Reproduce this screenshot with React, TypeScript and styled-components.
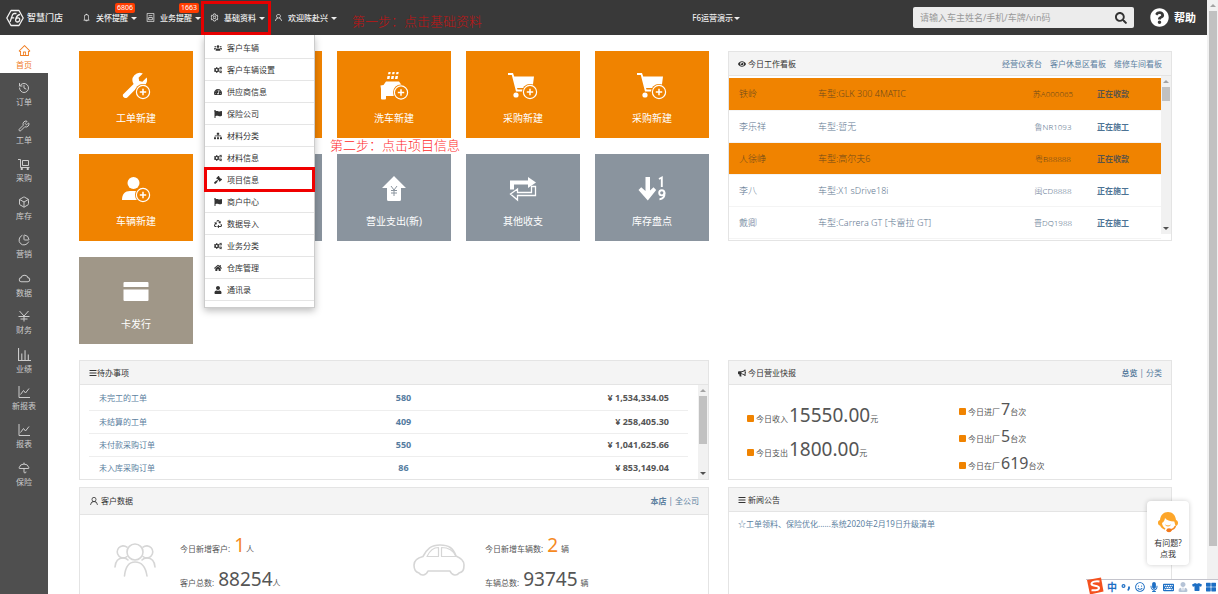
import React from 'react';
import styled, { createGlobalStyle } from 'styled-components';
import {
  AiOutlineHome, AiOutlineCloud, AiOutlineBell, AiOutlineSetting, AiOutlineUser,
} from 'react-icons/ai';
import {
  FaUsers, FaCogs, FaTachometerAlt, FaFlag, FaSitemap, FaGavel, FaRecycle, FaHome, FaUser,
  FaEye, FaBars, FaBullhorn, FaQuestionCircle, FaSearch, FaMicrophone, FaTshirt, FaKeyboard,
  FaUserTie, FaThLarge, FaRegSmile,
} from 'react-icons/fa';
import { Umbrella, History, Wrench, Box, PieChart } from 'lucide-react';

const ORANGE = '#f08300';
const SLATE = '#8a949e';
const TAUPE = '#a09788';
const LINK = '#5c7f9f';
const LINE = '#e4e4e4';

const GlobalStyle = createGlobalStyle`
  * { box-sizing: border-box; }
  body {
    margin: 0;
    font-family: 'Noto Sans', 'Noto Sans CJK SC', sans-serif;
    font-size: 8px;
    line-height: 12px;
    color: #555;
    background: #fff;
  }
  button, input { font: inherit; color: inherit; border: 0; padding: 0; background: none; }
  button { cursor: pointer; }
  a { color: inherit; text-decoration: none; }
  ul { list-style: none; margin: 0; padding: 0; }
  h2 { margin: 0; font: inherit; }
  svg { display: block; flex: none; }
`;

const Page = styled.div`
  position: relative;
  display: flex;
  height: 100vh;
  overflow: hidden;
`;
const Shell = styled.div`
  flex: 1;
  min-width: 0;
  display: flex;
  flex-direction: column;
`;

/* ---------- header ---------- */
const Header = styled.header`
  position: relative;
  z-index: 5;
  flex: none;
  display: flex;
  align-items: center;
  height: 35px;
  padding: 0 11px 0 6px;
  color: #eee;
  background: #393939;
`;
const Brand = styled.a`
  display: flex;
  align-items: center;
  gap: 3px;
  width: 76px;
  font-size: 9px;
  font-weight: 500;
`;
const Nav = styled.nav`
  display: flex;
  gap: 9px;
`;
const NavItem = styled.div`
  position: relative;
`;
const NavButton = styled.button`
  display: flex;
  align-items: center;
  height: 35px;
  white-space: nowrap;
  font-weight: 500;
`;
const NavLabel = styled.span`
  margin: 0 3px 0 5px;
`;
const Caret = styled.i`
  border: solid transparent;
  border-width: 3px 3px 0;
  border-top-color: currentColor;
  margin-top: 2px;
`;
const Badge = styled.span`
  position: absolute;
  top: 3px;
  right: 2px;
  height: 10px;
  padding: 0 2px;
  border-radius: 2px;
  font-size: 7px;
  line-height: 10px;
  color: #fff;
  background: #ff3c00;
`;
const Highlight = styled.span`
  position: absolute;
  z-index: 3;
  inset: 1px -6px 0 -9px;
  border: 3px solid #e60000;
  pointer-events: none;
`;
const Note = styled.p<{ $x: number; $y: number; $color: string }>`
  position: absolute;
  z-index: 6;
  left: ${p => p.$x}px;
  top: ${p => p.$y}px;
  margin: 0;
  font-size: 13px;
  font-weight: 300;
  line-height: 16px;
  white-space: nowrap;
  color: ${p => p.$color};
`;
const Store = styled.button`
  display: flex;
  align-items: center;
  margin: 0 173px 0 auto;
  gap: 1px;
  white-space: nowrap;
  font-weight: 500;
`;
const SearchBox = styled.form`
  display: flex;
  align-items: center;
  width: 221px;
  height: 21px;
  padding: 0 7px;
  border-radius: 2px;
  color: #333;
  background: #ececec;
`;
const SearchInput = styled.input`
  flex: 1;
  min-width: 0;
  font-size: 9px;
  outline: 0;
  &::placeholder { color: #999; opacity: 1; }
`;
const Help = styled.a`
  display: flex;
  align-items: center;
  gap: 5px;
  margin-left: 16px;
  font-size: 11px;
  font-weight: 700;
  color: #fff;
`;

/* ---------- drop-down ---------- */
const Menu = styled.ul`
  position: absolute;
  top: 35px;
  left: -6px;
  width: 111px;
  padding: 2px 0 6px;
  background: #fff;
  border: 1px solid #ccc;
  border-top: 0;
  box-shadow: 0 3px 7px rgba(0, 0, 0, 0.25);
  color: #333;
`;
const MenuItem = styled.li<{ $marked?: boolean }>`
  position: relative;
  border-bottom: 1px solid #e5e5e5;
  ${p => p.$marked && `
    &::after {
      content: '';
      position: absolute;
      inset: -2px -1px;
      border: 3px solid #f00000;
      pointer-events: none;
    }
  `}
`;
const MenuLink = styled.a`
  display: flex;
  align-items: center;
  gap: 5px;
  height: 21px;
  padding-left: 9px;
`;

/* ---------- side bar ---------- */
const Body = styled.div`
  flex: 1;
  min-height: 0;
  display: flex;
`;
const Side = styled.nav`
  flex: none;
  width: 48px;
  background: #4f4f4f;
`;
const SideLink = styled.a<{ $active?: boolean }>`
  display: flex;
  flex-direction: column;
  align-items: center;
  gap: 2px;
  height: 38px;
  padding-top: 9px;
  color: ${p => (p.$active ? '#f07c1e' : '#ccc')};
  background: ${p => (p.$active ? '#fff' : 'transparent')};
`;

/* ---------- main ---------- */
const Main = styled.main`
  flex: 1;
  min-width: 0;
  overflow: hidden;
  display: grid;
  grid-template-columns: 630fr 444fr;
  grid-template-rows: auto auto auto;
  align-content: start;
  column-gap: 19px;
  padding: 16px 35px 0 31px;
`;
const Tiles = styled.div`
  display: grid;
  grid-template-columns: repeat(5, 1fr);
  gap: 16px 15px;
  margin-bottom: 16px;
`;
const Tile = styled.button<{ $bg: string }>`
  display: flex;
  flex-direction: column;
  align-items: center;
  gap: 10px;
  height: 87px;
  padding-top: 21px;
  font-size: 10px;
  line-height: 16px;
  color: #fff;
  background: ${p => p.$bg};
`;
const Panel = styled.section<{ $h: number }>`
  display: flex;
  flex-direction: column;
  align-self: start;
  min-height: ${p => p.$h}px;
  margin-bottom: 7px;
  border: 1px solid ${LINE};
  background: #fff;
`;
const PanelHead = styled.header<{ $tall?: boolean }>`
  display: flex;
  align-items: center;
  justify-content: space-between;
  height: ${p => (p.$tall ? 27 : 24)}px;
  padding: 0 9px;
  border-bottom: 1px solid ${LINE};
  background: #f4f4f4;
`;
const PanelTitle = styled.h2<{ $gap?: number }>`
  display: flex;
  align-items: center;
  gap: ${p => p.$gap ?? 2}px;
  color: #333;
`;
const PanelLinks = styled.div<{ $gap: number }>`
  display: flex;
  gap: ${p => p.$gap}px;
  color: ${LINK};
`;
const Scrollable = styled.div`
  display: flex;
`;

const Board = styled.table`
  flex: 1;
  margin-top: 2px;
  table-layout: fixed;
  border-collapse: collapse;
  align-self: flex-start;
`;
const BoardRow = styled.tr<{ $hot?: boolean }>`
  height: 32px;
  border-bottom: 1px solid #f4f4f4;
  color: ${p => (p.$hot ? '#6e4a1c' : '#5f7891')};
  background: ${p => (p.$hot ? ORANGE : '#fff')};
`;
const BoardCell = styled.td<{ $w?: number }>`
  width: ${p => (p.$w ? `${p.$w}px` : 'auto')};
  padding: 1px 0 0;
  font-size: 9px;
  font-weight: 300;
  white-space: nowrap;
  &:first-child { padding-left: 10px; }
`;
const Plate = styled(BoardCell)`
  font-size: 8px;
  text-align: center;
`;
const Status = styled(BoardCell)<{ $hot?: boolean }>`
  padding-right: 18px;
  font-size: 8px;
  font-weight: 700;
  text-align: center;
  color: ${p => (p.$hot ? '#5c5448' : '#4d7394')};
`;

const Todo = styled.table`
  flex: 1;
  margin: 2px 10px 0 9px;
  table-layout: fixed;
  border-collapse: collapse;
`;
const TodoRow = styled.tr`
  height: 23px;
  &:not(:last-child) { border-bottom: 1px solid #eee; }
`;
const TodoName = styled.td`
  width: 33%;
  padding: 0 0 0 10px;
  color: ${LINK};
`;
const TodoCount = styled.td`
  width: 39%;
  padding: 0;
  font-size: 9px;
  font-weight: 700;
  text-align: center;
  color: #557c9f;
`;
const TodoSum = styled.td`
  padding: 0 19px 0 0;
  font-size: 9px;
  font-weight: 700;
  text-align: right;
  color: #555;
`;

const Split = styled.div`
  display: grid;
  grid-template-columns: 1fr 1fr;
`;
const Figures = styled.div<{ $top: number; $left: number }>`
  padding: ${p => p.$top}px 0 0 ${p => p.$left}px;
`;
const Figure = styled.div<{ $small?: boolean }>`
  display: flex;
  align-items: baseline;
  height: ${p => (p.$small ? 27 : 34)}px;
  line-height: ${p => (p.$small ? 27 : 34)}px;
  white-space: nowrap;
`;
const Dot = styled.i`
  width: 7px;
  height: 7px;
  margin-right: 2px;
  border-radius: 1px;
  background: ${ORANGE};
`;
const Num = styled.span<{ $size: number; $gap: number; $hot?: boolean }>`
  margin-left: ${p => p.$gap}px;
  font-size: ${p => p.$size}px;
  color: ${p => (p.$hot ? '#f58a1f' : '#555')};
`;
const Unit = styled.span<{ $gap?: number }>`
  margin-left: ${p => p.$gap || 0}px;
`;
const Customers = styled.div`
  display: grid;
  grid-template-columns: 299fr 295fr;
  padding: 13px 0 0 34px;
`;
const Customer = styled.div<{ $art: number }>`
  display: grid;
  grid-template-columns: ${p => p.$art}px 1fr;
  & > svg { margin-top: 14px; }
`;
const News = styled.a`
  padding: 6px 9px;
  color: ${LINK};
`;

/* ---------- scroll bars ---------- */
const Bar = styled.div`
  flex: none;
  display: flex;
  flex-direction: column;
  align-items: center;
  width: 10px;
  background: #f1f1f1;
`;
const BoardBar = styled(Bar)`
  margin-bottom: 5px;
`;
const PageBar = styled(Bar)`
  width: 11px;
`;
const Arrow = styled.i<{ $down?: boolean }>`
  flex: none;
  margin: ${p => (p.$down ? 'auto 0 4px' : '4px 0')};
  border: solid transparent;
  border-width: ${p => (p.$down ? '3px 3px 0' : '0 3px 3px')};
  border-top-color: ${p => (p.$down ? '#505050' : 'transparent')};
  border-bottom-color: ${p => (p.$down ? 'transparent' : '#a3a3a3')};
`;
const Thumb = styled.div<{ $size: string }>`
  flex: none;
  width: 8px;
  height: ${p => p.$size};
  background: #c1c1c1;
`;

/* ---------- floating parts ---------- */
const Ask = styled.button`
  position: absolute;
  z-index: 4;
  right: 29px;
  bottom: 29px;
  display: flex;
  flex-direction: column;
  align-items: center;
  width: 42px;
  height: 64px;
  padding-top: 10px;
  border-radius: 4px;
  line-height: 11px;
  color: #333;
  background: #fff;
  box-shadow: 0 0 5px rgba(0, 0, 0, 0.2);
  & > svg { margin-bottom: 4px; }
`;
const Ime = styled.div`
  position: absolute;
  z-index: 6;
  right: 0;
  bottom: 0;
  display: flex;
  align-items: center;
  gap: 4px;
  height: 15px;
  padding: 0 2px 0 21px;
  border-top: 1px solid #c4c4cc;
  font-size: 10px;
  font-weight: 700;
  color: #1d6fc4;
  background: #fff;
  & > svg:first-child { position: absolute; left: 0; bottom: -1px; }
`;

/* ---------- drawings ---------- */
const PlusBadge = ({ bg, cx = 22, cy = 20 }: { bg: string; cx?: number; cy?: number }) => (
  <g stroke="#fff" fill="none">
    <circle cx={cx} cy={cy} r="8" fill={bg} stroke="none" />
    <circle cx={cx} cy={cy} r="6.6" strokeWidth="1.2" />
    <path d={`M${cx - 3.2} ${cy}h6.4M${cx} ${cy - 3.2}v6.4`} strokeWidth="1.5" />
  </g>
);
const TileSvg = ({ children }: { children: React.ReactNode }) => (
  <svg width="30" height="28" viewBox="0 0 30 28" fill="#fff">{children}</svg>
);
const WrenchArt = () => (
  <TileSvg>
    <path d="M2 22.5 12.6 12A7.3 7.3 0 0 1 21.8 1.5L17.6 5.8l.6 3.2 3.2.8 4.3-4.2c1.6 5-2 9.8-6.5 9.8-1 0-1.800-.1-2.500-.4L6.300 25.400a2.700 2.700 0 0 1-4.300-2.900z" />
    <PlusBadge bg={ORANGE} />
  </TileSvg>
);
const CarWashArt = () => (
  <TileSvg>
    <path d="M9.500 0h2.200l-.4 2.300H9zM13.500 0h2.200l-.4 2.300H13zM17.500 0h2.200l-.4 2.300H17zM8.500 4H11l-.5 3H8zM12.500 4H15l-.5 3H12zM16.500 4H19l-.5 3H16z" />
    <path d="M7 9.500h13l4 5.500v9H7v2.500a1 1 0 0 1-1 1H3a1 1 0 0 1-1-1V17l-.5-3.500 3-.5z" />
    <PlusBadge bg={ORANGE} cx={22} cy={20.5} />
  </TileSvg>
);
const CartArt = () => (
  <TileSvg>
    <path d="M0 1h5l1.200 3.500H26l-1.500 11.500H9l.5 1.500H22v2H8L3.800 3H0z" />
    <circle cx="8" cy="23" r="2.600" />
    <PlusBadge bg={ORANGE} />
  </TileSvg>
);
const PersonArt = () => (
  <TileSvg>
    <circle cx="12.500" cy="8" r="6" />
    <path d="M1 25c0-6 3-9 8-9h7c4 0 7 3 8 9z" />
    <PlusBadge bg={ORANGE} />
  </TileSvg>
);
const SpendArt = () => (
  <TileSvg>
    <path d="M15 1 27 13h-5v11.500a1.500 1.500 0 0 1-1.500 1.500h-11A1.500 1.500 0 0 1 8 24.500V13H3z" />
    <path d="m12 11 3 4 3-4M15 15v6M12 15.500h6M12 18h6" fill="none" stroke={SLATE} strokeWidth="1" />
  </TileSvg>
);
const SwapArt = () => (
  <TileSvg>
    <path d="M2 14.500V5.500h18V2l8 5.500-8 5.500V9.500H6v5z" />
    <path d="M27.500 11.500v9H9.500V25L2.500 19l7-5v3.500h14v-6z" fill="none" stroke="#fff" strokeWidth="1.300" />
  </TileSvg>
);
const SortArt = () => (
  <TileSvg>
    <path d="M8.500 2h4.500v13.500l3.500-3.300 2.700 2.800L10.800 25.500 1.500 15l2.700-2.800 4.300 3.800z" />
    <g fill="none" stroke="#fff" strokeWidth="1.900">
      <path d="M22 4 24.800 2.500v9.500" />
      <circle cx="24.800" cy="17.800" r="2.600" />
      <path d="M27.500 17.500c.2 4-1.500 6.500-5 6.700" />
    </g>
  </TileSvg>
);
const CardArt = () => (
  <TileSvg>
    <path d="M3.500 4h23a1 1 0 0 1 1 1v4h-25V5a1 1 0 0 1 1-1zM2.500 11.500h25V22a1 1 0 0 1-1 1h-23a1 1 0 0 1-1-1z" />
  </TileSvg>
);
const LineIcon = ({ d, size = 12 }: { d: string; size?: number }) => (
  <svg width={size} height={size} viewBox="0 0 12 12" fill="none" stroke="currentColor"><path d={d} /></svg>
);
const TROLLEY = 'M0 1.500h2.500V9.500h9M4.500 2.500h6v5h-6zM3 10.500h1.500v1H3zM9 10.500h1.500v1H9z';
const YUAN = 'm1.500 1 4.500 5 4.500-5M6 6v5.500M.5 6.500h11M2.500 9h7';
const COLUMNS = 'M.5 0v11.500H12M3.500 5v6M6.500 2v9M9.500 6v5';
const TREND = 'M1 0v11.500h11M2.500 8.500l3-4 2 2.500 3.500-4.500';
const NOTICE = 'M1.500.5h9v11h-9zM3.500 3.500h5M3.500 6h5v3h-5z';
const LogoIcon = () => (
  <svg width="18" height="18" viewBox="0 0 18 18" fill="none" stroke="#f2f2f2" strokeWidth="1.300" strokeLinejoin="round">
    <path d="M5 1.500h8L17.200 9 13 16.500H5L.8 9z" />
    <path d="M10.500 4.500H8.300c-1 0-1.500.7-1.900 1.600L4 13M4.800 8.800h3.400M14 5.500c-2.300.3-3.600 2.200-4.200 4.500-.5 2 .2 3 1.400 3s2.300-1 2.500-2.200c.200-1.300-.6-1.900-1.600-1.900-1 0-1.900.6-2.300 1.400" />
  </svg>
);
const PeopleArt = () => (
  <svg width="42" height="36" viewBox="0 0 42 36" fill="none" stroke="#d6d6d6" strokeWidth="1.600" strokeLinecap="round">
    <circle cx="21" cy="10" r="8" />
    <path d="M10.500 34C11.500 24 15 20 21 20s10.500 4 12 14" />
    <path d="M13 5.200A6 6 0 1 0 13 14.500M29 5.200A6 6 0 1 1 29 14.500" />
    <path d="M1 25c.5-6 3-9 8-9 2 0 3.800.5 5 2M41 25c-.5-6-3-9-8-9-2 0-3.800.5-5 2" />
  </svg>
);
const CarArt = () => (
  <svg width="52" height="36" viewBox="0 0 52 36" fill="none" stroke="#d6d6d6" strokeWidth="1.600" strokeLinejoin="round">
    <path d="M6 31C2 30 1 27 1 23c0-5 3-7 9-8.500C14 7 18 3 27 3s13 3 16 11c5 2 8 5 8 9 0 5-1 7-5 8-2 3-7 3-9-2H15c-2 5-7 5-9 2z" />
    <path d="M14 14.500C17 8 20 5.500 25.500 5.500v9zM28.500 5.500v9H43C40 7.500 35 5.500 28.500 5.500z" strokeWidth="1.200" />
  </svg>
);
const AgentArt = () => (
  <svg width="22" height="22" viewBox="0 0 22 22">
    <path d="M3 9C3.500 4 6.500 1 11 1s7.500 3 8 8c1.500.5 2 1.500 2 3s-.8 2.800-2.500 3l-1.200-4.500C13 10.500 9.500 9 8 7c-.5 3-1.500 4-3 5 .2 2.500 1.500 4.500 3.500 5.500l-.8 1.300C5 17.500 3.500 16 3 14.500c-1.500-.2-2-1.500-2-2.800S1.500 9.500 3 9z" fill="#fda62a" />
    <path d="M8.500 14c1.500 1.300 3.500 1.300 5 0" stroke="#fda62a" fill="none" />
    <path d="M18.500 15c-.8 2-2.500 3.500-5 4" stroke="#f58a1f" strokeWidth="1.400" fill="none" />
    <ellipse cx="12" cy="19.200" rx="2.600" ry="2" fill="#f3791c" />
  </svg>
);
const SogouArt = () => (
  <svg width="18" height="18" viewBox="0 0 18 18">
    <path d="M1 3 15 .5l2.500 14L4 17.500z" fill="#f4511e" />
    <path d="M13.500 4.500C10 4 5.500 4.500 5.500 7c0 2.500 7.500 1 7.500 4 0 2.300-4.500 2.600-7.500 2.200" fill="none" stroke="#fff" strokeWidth="2" />
  </svg>
);
const PunctuationIcon = () => (
  <svg width="10" height="10" viewBox="0 0 10 10" fill="none" stroke="#1d6fc4" strokeWidth="1.200">
    <circle cx="2.500" cy="4" r="1.400" /><path d="M8 4.500v1.800L7 8.500" strokeWidth="1.800" />
  </svg>
);

/* ---------- data ---------- */
const sideItems: [string, React.ReactNode][] = [
  ['首页', <AiOutlineHome size={13} />], ['订单', <History size={12} strokeWidth={2} />],
  ['工单', <Wrench size={12} strokeWidth={2} />], ['采购', <LineIcon d={TROLLEY} />],
  ['库存', <Box size={12} strokeWidth={2} />], ['营销', <PieChart size={12} strokeWidth={2} />],
  ['数据', <AiOutlineCloud size={13} />], ['财务', <LineIcon d={YUAN} />],
  ['业绩', <LineIcon d={COLUMNS} size={13} />], ['新报表', <LineIcon d={TREND} />],
  ['报表', <LineIcon d={TREND} />], ['保险', <Umbrella size={12} strokeWidth={2} />],
];

const menuItems = [
  ['客户车辆', FaUsers], ['客户车辆设置', FaCogs], ['供应商信息', FaTachometerAlt],
  ['保险公司', FaFlag], ['材料分类', FaSitemap], ['材料信息', FaCogs], ['项目信息', FaGavel],
  ['商户中心', FaFlag], ['数据导入', FaRecycle], ['业务分类', FaCogs], ['仓库管理', FaHome],
  ['通讯录', FaUser],
] as const;

const tiles: [string, string, React.ReactNode][] = [
  ['工单新建', ORANGE, <WrenchArt />], ['', ORANGE, null], ['洗车新建', ORANGE, <CarWashArt />],
  ['采购新建', ORANGE, <CartArt />], ['采购新建', ORANGE, <CartArt />],
  ['车辆新建', ORANGE, <PersonArt />], ['', SLATE, null], ['营业支出(新)', SLATE, <SpendArt />],
  ['其他收支', SLATE, <SwapArt />], ['库存盘点', SLATE, <SortArt />],
  ['卡发行', TAUPE, <CardArt />],
];

const board: [string, string, string, string][] = [
  ['铁岭', 'GLK 300 4MATIC', '苏A000065', '正在收款'],
  ['李乐祥', '暂无', '鲁NR1093', '正在施工'],
  ['人徐峥', '高尔夫6', '粤B88888', '正在收款'],
  ['李八', 'X1 sDrive18i', '闽CD8888', '正在施工'],
  ['戴卿', 'Carrera GT [卡雷拉 GT]', '晋DQ1988', '正在施工'],
];

const todos = [
  ['未完工的工单', '580', '¥ 1,534,334.05'], ['未结算的工单', '409', '¥ 258,405.30'],
  ['未付款采购订单', '550', '¥ 1,041,625.66'], ['未入库采购订单', '86', '¥ 853,149.04'],
];

const NavEntry = ({ icon, label, badge, children }: {
  icon: React.ReactNode; label: string; badge?: string; children?: React.ReactNode;
}) => (
  <NavItem>
    <NavButton type="button">{icon}<NavLabel>{label}</NavLabel><Caret /></NavButton>
    {badge && <Badge>{badge}</Badge>}
    {children}
  </NavItem>
);

export default function App() {
  return (
    <Page>
      <GlobalStyle />
      <Shell>
        <Header>
          <Brand href="#"><LogoIcon />智慧门店</Brand>
          <Nav>
            <NavEntry icon={<AiOutlineBell size={9} />} label="关怀提醒" badge="6806" />
            <NavEntry icon={<LineIcon d={NOTICE} size={9} />} label="业务提醒" badge="1663" />
            <NavEntry icon={<AiOutlineSetting size={9} />} label="基础资料">
              <Highlight />
              <Menu>
                {menuItems.map(([label, Icon]) => (
                  <MenuItem key={label} $marked={label === '项目信息'}>
                    <MenuLink href="#"><Icon size={8} />{label}</MenuLink>
                  </MenuItem>
                ))}
              </Menu>
            </NavEntry>
            <NavEntry icon={<AiOutlineUser size={9} />} label="欢迎陈赴兴" />
          </Nav>
          <Store type="button">F6运营演示<Caret /></Store>
          <SearchBox>
            <SearchInput aria-label="搜索" placeholder="请输入车主姓名/手机/车牌/vin码" />
            <button type="button" aria-label="查询"><FaSearch size={12} /></button>
          </SearchBox>
          <Help href="#"><FaQuestionCircle size={19} />帮助</Help>
        </Header>
        <Body>
          <Side>
            {sideItems.map(([label, icon], i) => (
              <SideLink href="#" key={label} $active={i === 0}>{icon}{label}</SideLink>
            ))}
          </Side>
          <Main>
            <Tiles>
              {tiles.map(([label, bg, art], i) => (
                <Tile type="button" key={i} $bg={bg}>{art}{label}</Tile>
              ))}
            </Tiles>
            <Panel $h={190}>
              <PanelHead>
                <PanelTitle><FaEye size={8} />今日工作看板</PanelTitle>
                <PanelLinks $gap={8}>
                  <a href="#">经营仪表台</a><a href="#">客户休息区看板</a><a href="#">维修车间看板</a>
                </PanelLinks>
              </PanelHead>
              <Scrollable>
                <Board>
                  <tbody>
                    {board.map(([name, car, plate, status]) => {
                      const hot = status === '正在收款';
                      return (
                        <BoardRow key={name} $hot={hot}>
                          <BoardCell $w={89}>{name}</BoardCell>
                          <BoardCell>车型:{car}</BoardCell>
                          <Plate $w={60}>{plate}</Plate>
                          <Status $w={78} $hot={hot}>{status}</Status>
                        </BoardRow>
                      );
                    })}
                  </tbody>
                </Board>
                <BoardBar><Arrow /><Thumb $size="14px" /><Arrow $down /></BoardBar>
              </Scrollable>
            </Panel>

            <Panel $h={120}>
              <PanelHead><PanelTitle $gap={0}><FaBars size={8} />待办事项</PanelTitle></PanelHead>
              <Scrollable>
                <Todo>
                  <tbody>
                    {todos.map(([name, count, sum]) => (
                      <TodoRow key={name}>
                        <TodoName><a href="#">{name}</a></TodoName>
                        <TodoCount>{count}</TodoCount>
                        <TodoSum>{sum}</TodoSum>
                      </TodoRow>
                    ))}
                  </tbody>
                </Todo>
                <Bar><Arrow /><Thumb $size="48px" /><Arrow $down /></Bar>
              </Scrollable>
            </Panel>
            <Panel $h={120}>
              <PanelHead>
                <PanelTitle><FaBullhorn size={8} />今日营业快报</PanelTitle>
                <PanelLinks $gap={2}><a href="#"><b>总览</b></a>|<a href="#">分类</a></PanelLinks>
              </PanelHead>
              <Split>
                <Figures $top={13} $left={18}>
                  <Figure><Dot />今日收入<Num $size={19} $gap={1}>15550.00</Num><Unit>元</Unit></Figure>
                  <Figure><Dot />今日支出<Num $size={19} $gap={1}>1800.00</Num><Unit>元</Unit></Figure>
                </Figures>
                <Figures $top={11} $left={9}>
                  <Figure $small><Dot />今日进厂<Num $size={16} $gap={1}>7</Num><Unit>台次</Unit></Figure>
                  <Figure $small><Dot />今日出厂<Num $size={16} $gap={1}>5</Num><Unit>台次</Unit></Figure>
                  <Figure $small><Dot />今日在厂<Num $size={16} $gap={1}>619</Num><Unit>台次</Unit></Figure>
                </Figures>
              </Split>
            </Panel>

            <Panel $h={140}>
              <PanelHead $tall>
                <PanelTitle><AiOutlineUser size={10} />客户数据</PanelTitle>
                <PanelLinks $gap={2}><a href="#"><b>本店</b></a>|<a href="#">全公司</a></PanelLinks>
              </PanelHead>
              <Customers>
                <Customer $art={66}>
                  <PeopleArt />
                  <div>
                    <Figure>今日新增客户:<Num $size={19} $gap={4} $hot>1</Num><Unit $gap={1}>人</Unit></Figure>
                    <Figure>客户总数:<Num $size={19} $gap={4}>88254</Num><Unit>人</Unit></Figure>
                  </div>
                </Customer>
                <Customer $art={72}>
                  <CarArt />
                  <div>
                    <Figure>今日新增车辆数:<Num $size={19} $gap={4} $hot>2</Num><Unit $gap={3}>辆</Unit></Figure>
                    <Figure>车辆总数:<Num $size={19} $gap={4}>93745</Num><Unit $gap={3}>辆</Unit></Figure>
                  </div>
                </Customer>
              </Customers>
            </Panel>
            <Panel $h={140}>
              <PanelHead><PanelTitle><FaBars size={8} />新闻公告</PanelTitle></PanelHead>
              <News href="#">☆工单领料、保险优化......系统2020年2月19日升级清单</News>
            </Panel>
          </Main>
        </Body>
      </Shell>
      <PageBar><Arrow /><Thumb $size="90%" /></PageBar>
      <Note $x={352} $y={13} $color="#c01414">第一步：点击基础资料</Note>
      <Note $x={330} $y={137} $color="#ff2a2a">第二步：点击项目信息</Note>
      <Ask type="button"><AgentArt />有问题?<br />点我</Ask>
      <Ime>
        <SogouArt />中<PunctuationIcon /><FaRegSmile size={10} /><FaMicrophone size={10} />
        <FaKeyboard size={11} /><FaUserTie size={10} color="#b5c3d6" /><FaTshirt size={10} /><FaThLarge size={10} />
      </Ime>
    </Page>
  );
}
